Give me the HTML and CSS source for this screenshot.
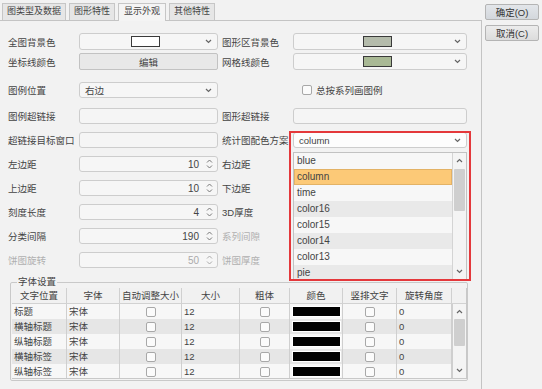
FILE: index.html
```html
<!DOCTYPE html>
<html lang="zh">
<head>
<meta charset="utf-8">
<title>统计图属性</title>
<link rel="stylesheet" href="styles.css">
</head>
<body>
<div class="window">
  <div class="main">
    <div class="tabs">
      <div class="tab">图类型及数据</div>
      <div class="tab">图形特性</div>
      <div class="tab active">显示外观</div>
      <div class="tab">其他特性</div>
    </div>
    <div class="panel">
      <div class="form">
        <div class="row tall">
          <span class="lbl">全图背景色</span>
          <div class="ctl colorsel"><span class="swatch sw-white"></span><svg class="chev" width="7" height="5" viewBox="0 0 7 5"><path d="M1 1l2.5 2.5L6 1" fill="none" stroke="#666" stroke-width="1.2"/></svg></div>
          <span class="lbl lbl2">图形区背景色</span>
          <div class="ctl colorsel"><span class="swatch sw-gray"></span><svg class="chev" width="7" height="5" viewBox="0 0 7 5"><path d="M1 1l2.5 2.5L6 1" fill="none" stroke="#666" stroke-width="1.2"/></svg></div>
        </div>
        <div class="row tall r2">
          <span class="lbl">坐标线颜色</span>
          <div class="ctl btn">编辑</div>
          <span class="lbl lbl2">网格线颜色</span>
          <div class="ctl colorsel"><span class="swatch sw-green"></span><svg class="chev" width="7" height="5" viewBox="0 0 7 5"><path d="M1 1l2.5 2.5L6 1" fill="none" stroke="#666" stroke-width="1.2"/></svg></div>
        </div>
        <div class="row r3">
          <span class="lbl">图例位置</span>
          <div class="ctl select"><span class="val">右边</span><svg class="chev" width="7" height="5" viewBox="0 0 7 5"><path d="M1 1l2.5 2.5L6 1" fill="none" stroke="#666" stroke-width="1.2"/></svg></div>
          <span class="lbl2 check-wrap"><span class="cb"></span>总按系列画图例</span>
        </div>
        <div class="row r4">
          <span class="lbl">图例超链接</span>
          <div class="ctl input"></div>
          <span class="lbl lbl2">图形超链接</span>
          <div class="ctl input"></div>
        </div>
        <div class="row">
          <span class="lbl">超链接目标窗口</span>
          <div class="ctl input"></div>
          <span class="lbl lbl2">统计图配色方案</span>
          <div class="combo">
            <div class="ctl select select-white"><span class="val">column</span><svg class="chev" width="7" height="5" viewBox="0 0 7 5"><path d="M1 1l2.5 2.5L6 1" fill="none" stroke="#666" stroke-width="1.2"/></svg></div>
            <div class="popup">
              <ul class="items">
                <li>blue</li>
                <li class="sel">column</li>
                <li>time</li>
                <li class="alt">color16</li>
                <li>color15</li>
                <li class="alt">color14</li>
                <li>color13</li>
                <li class="alt">pie</li>
              </ul>
              <div class="vscroll">
                <span class="arrow"><svg width="7" height="5" viewBox="0 0 7 5"><path d="M1 4l2.5-2.5L6 4" fill="none" stroke="#666" stroke-width="1.2"/></svg></span>
                <span class="track"><span class="thumb list-thumb"></span></span>
                <span class="arrow"><svg width="7" height="5" viewBox="0 0 7 5"><path d="M1 1l2.5 2.5L6 1" fill="none" stroke="#666" stroke-width="1.2"/></svg></span>
              </div>
            </div>
            <div class="highlight"></div>
          </div>
        </div>
        <div class="row">
          <span class="lbl">左边距</span>
          <div class="ctl spin"><span class="num">10</span><svg class="spinarr" width="7" height="12" viewBox="0 0 7 12"><path d="M1 4.5l2.5-2.5L6 4.5M1 7.5l2.5 2.5L6 7.5" fill="none" stroke="#777" stroke-width="1"/></svg></div>
          <span class="lbl lbl2">右边距</span>
        </div>
        <div class="row">
          <span class="lbl">上边距</span>
          <div class="ctl spin"><span class="num">10</span><svg class="spinarr" width="7" height="12" viewBox="0 0 7 12"><path d="M1 4.5l2.5-2.5L6 4.5M1 7.5l2.5 2.5L6 7.5" fill="none" stroke="#777" stroke-width="1"/></svg></div>
          <span class="lbl lbl2">下边距</span>
        </div>
        <div class="row">
          <span class="lbl">刻度长度</span>
          <div class="ctl spin"><span class="num">4</span><svg class="spinarr" width="7" height="12" viewBox="0 0 7 12"><path d="M1 4.5l2.5-2.5L6 4.5M1 7.5l2.5 2.5L6 7.5" fill="none" stroke="#777" stroke-width="1"/></svg></div>
          <span class="lbl lbl2">3D厚度</span>
        </div>
        <div class="row">
          <span class="lbl">分类间隔</span>
          <div class="ctl spin"><span class="num">190</span><svg class="spinarr" width="7" height="12" viewBox="0 0 7 12"><path d="M1 4.5l2.5-2.5L6 4.5M1 7.5l2.5 2.5L6 7.5" fill="none" stroke="#777" stroke-width="1"/></svg></div>
          <span class="lbl lbl2 disabled">系列间隙</span>
        </div>
        <div class="row">
          <span class="lbl disabled">饼图旋转</span>
          <div class="ctl spin is-disabled"><span class="num">50</span><svg class="spinarr" width="7" height="12" viewBox="0 0 7 12"><path d="M1 4.5l2.5-2.5L6 4.5M1 7.5l2.5 2.5L6 7.5" fill="none" stroke="#aaa" stroke-width="1"/></svg></div>
          <span class="lbl lbl2 disabled">饼图厚度</span>
        </div>
      </div>

      <fieldset class="fonts">
        <legend>字体设置</legend>
        <div class="grid">
          <div class="ghead">
            <span>文字位置</span><span>字体</span><span>自动调整大小</span><span>大小</span><span>粗体</span><span>颜色</span><span>竖排文字</span><span>旋转角度</span><span class="gcorner"></span>
          </div>
          <div class="gbody">
            <div class="grows">
              <div class="grow"><span>标题</span><span>宋体</span><span class="c"><i class="cb"></i></span><span>12</span><span class="c"><i class="cb"></i></span><span class="c"><i class="black"></i></span><span class="c"><i class="cb"></i></span><span>0</span></div>
              <div class="grow alt"><span>横轴标题</span><span>宋体</span><span class="c"><i class="cb"></i></span><span>12</span><span class="c"><i class="cb"></i></span><span class="c"><i class="black"></i></span><span class="c"><i class="cb"></i></span><span>0</span></div>
              <div class="grow"><span>纵轴标题</span><span>宋体</span><span class="c"><i class="cb"></i></span><span>12</span><span class="c"><i class="cb"></i></span><span class="c"><i class="black"></i></span><span class="c"><i class="cb"></i></span><span>0</span></div>
              <div class="grow alt"><span>横轴标签</span><span>宋体</span><span class="c"><i class="cb"></i></span><span>12</span><span class="c"><i class="cb"></i></span><span class="c"><i class="black"></i></span><span class="c"><i class="cb"></i></span><span>0</span></div>
              <div class="grow"><span>纵轴标签</span><span>宋体</span><span class="c"><i class="cb"></i></span><span>12</span><span class="c"><i class="cb"></i></span><span class="c"><i class="black"></i></span><span class="c"><i class="cb"></i></span><span>0</span></div>
            </div>
            <div class="vscroll gscroll">
              <span class="arrow"><svg width="7" height="5" viewBox="0 0 7 5"><path d="M1 4l2.5-2.5L6 4" fill="none" stroke="#666" stroke-width="1.2"/></svg></span>
              <span class="track"><span class="thumb grid-thumb"></span></span>
              <span class="arrow"><svg width="7" height="5" viewBox="0 0 7 5"><path d="M1 1l2.5 2.5L6 1" fill="none" stroke="#666" stroke-width="1.2"/></svg></span>
            </div>
          </div>
        </div>
      </fieldset>
    </div>
  </div>
  <div class="side">
    <button class="dbtn primary">确定(O)</button>
    <button class="dbtn">取消(C)</button>
  </div>
</div>
</body>
</html>
```

FILE: styles.css
```css
* { box-sizing: border-box; }
html, body { margin: 0; padding: 0; }
body {
  width: 542px;
  height: 389px;
  overflow: hidden;
  background: #f2f2f2;
  color: #444;
  font-family: "Liberation Sans", "Noto Sans CJK SC", sans-serif;
  font-size: 9.5px;
}
.window { display: flex; height: 389px; }
.main { width: 482px; display: flex; flex-direction: column; }

.tabs {
  height: 20px;
  display: flex;
  align-items: flex-end;
  gap: 3px;
  padding-left: 2px;
}
.tab {
  height: 17px;
  padding: 0 4px;
  font-size: 9px;
  line-height: 15px;
  color: #444;
  background: #e6e6e6;
  border: 1px solid #c6c6c6;
  border-bottom: none;
}
.tab.active {
  height: 18px;
  background: #f4f4f4;
  padding: 0 5px;
  margin-bottom: -1px;
  position: relative;
}

.panel {
  flex: 1;
  border-top: 1px solid #c4c4c4;
  border-right: 1px solid #c4c4c4;
  padding: 12px 0 0 8px;
}
.form { display: flex; flex-direction: column; }
.row {
  display: grid;
  grid-template-columns: 71px 139px 75px 174px;
  height: 16px;
  align-items: center;
  margin-top: 8px;
}
.row:first-child { margin-top: 0; }
.row.tall { height: 17px; }
.row.r2 { margin-top: 3px; }
.row.r3 { margin-top: 12px; }
.row.r4 { margin-top: 10px; }

.lbl { white-space: nowrap; color: #444; }
.lbl2 { padding-left: 4px; }
.disabled { color: #b0b0b0; }

.ctl {
  height: 100%;
  border: 1px solid #cdcdcd;
  border-radius: 3px;
  background: #f6f6f6;
  display: flex;
  align-items: center;
}
.colorsel { padding-right: 5px; }
.colorsel .swatch { margin: 0 auto; position: relative; left: 3px; }
.swatch {
  display: block;
  width: 29px;
  height: 11px;
  border: 1px solid #3a3a3a;
}
.sw-white { background: #ffffff; }
.sw-gray { background: #b4bbab; }
.sw-green { background: #a9b995; }
.chev { flex: none; }

.btn {
  justify-content: center;
  background: #e8e8e8;
  border-color: #c2c2c2;
  border-radius: 2px;
}
.select { padding: 0 5px 0 5px; justify-content: space-between; }
.select-white { background: #fdfdfd; height: 16px; }
.input { background: #f5f5f5; }

.check-wrap {
  display: flex;
  align-items: center;
  gap: 4px;
  padding-left: 84px;
  grid-column: 3 / 5;
}
.cb {
  display: inline-block;
  width: 10px;
  height: 10px;
  border: 1px solid #a8a8a8;
  border-radius: 2px;
  background: #fbfbfb;
}

.spin { justify-content: flex-end; padding-right: 4px; }
.spin .num { margin-right: 7px; font-size: 10px; }
.spinarr { flex: none; }
.is-disabled { color: #aaa; }

/* combo dropdown */
.combo { position: relative; height: 16px; }
.popup {
  position: absolute;
  left: 0;
  top: 20px;
  width: 174px;
  height: 128px;
  border: 1px solid #c2c2c2;
  background: #f7f7f7;
  display: flex;
  z-index: 2;
}
.items {
  list-style: none;
  margin: 0;
  padding: 0;
  flex: 1;
}
.items li {
  height: 16px;
  line-height: 16px;
  padding-left: 3px;
  color: #444;
  font-size: 10px;
}
.items li.alt { background: #e9e9e9; }
.items li.sel {
  background: #fcc977;
  border: 1px solid #e3b265;
  line-height: 14px;
  padding-left: 2px;
}
.highlight {
  position: absolute;
  left: -4px;
  top: -1px;
  width: 182px;
  height: 150px;
  border: 2px solid #e4383b;
  z-index: 3;
  pointer-events: none;
}

.vscroll {
  width: 14px;
  display: flex;
  flex-direction: column;
  border-left: 1px solid #d4d4d4;
  background: #f4f4f4;
}
.vscroll .arrow {
  height: 15px;
  display: flex;
  align-items: center;
  justify-content: center;
  flex: none;
}
.vscroll .track { flex: 1; position: relative; }
.thumb {
  position: absolute;
  left: 1px;
  right: 1px;
  background: #cfcfcf;
  border-radius: 1px;
}
.list-thumb { top: 1px; height: 42px; }
.grid-thumb { top: 0; height: 27px; }

/* font settings */
.fonts {
  margin: 9px 0 0 2px;
  width: 458px;
  padding: 0 0 0 1px;
  border: 1px solid #c9c9c9;
  border-radius: 2px;
  height: 104px;
}
.fonts legend {
  padding: 0 1px;
  margin-left: 5px;
  font-size: 9.5px;
  color: #444;
  line-height: 10px;
}
.grid {
  width: 455px;
  border-right: 1px solid #c8c8c8;
  border-bottom: 1px solid #c8c8c8;
  margin-top: 1px;
}
.ghead, .grow {
  display: grid;
  grid-template-columns: 55px 53px 62px 58px 50px 53px 54px 55px;
}
.ghead {
  grid-template-columns: 55px 53px 62px 58px 50px 53px 54px 55px 15px;
  height: 16px;
  line-height: 15px;
  background: #f1f1f1;
  border-bottom: 1px solid #d2d2d2;
}
.ghead span {
  text-align: center;
  border-right: 1px solid #d0d0d0;
  color: #444;
}
.ghead span.gcorner { border-right: none; }
.gbody { display: flex; height: 74px; overflow: hidden; }
.grows { width: 440px; }
.grow { height: 15px; background: #f7f7f7; overflow: hidden; }
.grow.alt { background: #e6e6e6; }
.grow span {
  border-right: 1px solid #cfcfcf;
  padding-left: 2px;
  height: 15px;
  line-height: 15px;
  display: flex;
  align-items: center;
  color: #444;
}
.grow span.c { justify-content: center; padding-left: 0; }
.grow .cb { width: 10px; height: 10px; }
.black {
  display: block;
  width: 49px;
  height: 11px;
  background: #000;
  border: 1px solid #fff;
}
.gscroll { width: 15px; border-left: 1px solid #cfcfcf; }

.side {
  flex: 1;
  display: flex;
  flex-direction: column;
  align-items: flex-start;
  padding: 4px 0 0 3px;
  gap: 5px;
}
.dbtn {
  width: 54px;
  height: 16px;
  padding: 0;
  font-family: inherit;
  font-size: 9.5px;
  color: #333;
  background: linear-gradient(#ececec, #dcdcdc);
  border: 1px solid #b4b4b4;
  border-radius: 2px;
}
.dbtn.primary { background: linear-gradient(#e3e6ea, #d3d7dc); }
```
